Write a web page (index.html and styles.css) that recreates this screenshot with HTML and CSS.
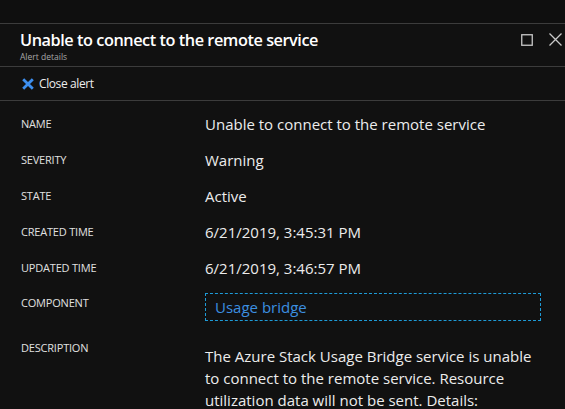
FILE: index.html
```html
<!DOCTYPE html>
<html>
<head>
<meta charset="utf-8">
<link rel="stylesheet" href="styles.css">
</head>
<body>
<div class="topbar"></div>
<div class="blade">
  <header class="head">
    <div class="titles">
      <h1 class="title">Unable to connect to the remote service</h1>
      <div class="subtitle">Alert details</div>
    </div>
    <div class="winbtns">
      <svg class="ico" width="12" height="12" viewBox="0 0 12 12"><rect x="0.75" y="0.75" width="10.5" height="10.5" fill="none" stroke="#c8c8c8" stroke-width="1.3"/></svg>
      <svg class="ico" width="13" height="13" viewBox="0 0 13 13"><path d="M0.5 0.5 L12.5 12.5 M12.5 0.5 L0.5 12.5" stroke="#c8c8c8" stroke-width="1.3"/></svg>
    </div>
  </header>
  <div class="toolbar">
    <span class="cmd">
      <svg width="12" height="12" viewBox="0 0 12 12"><path d="M1.2 1.2 L10.8 10.8 M10.8 1.2 L1.2 10.8" stroke="#3d8ff0" stroke-width="2.8"/></svg>
      <span>Close alert</span>
    </span>
  </div>
  <div class="props">
    <div class="row"><div class="lbl">NAME</div><div class="val">Unable to connect to the remote service</div></div>
    <div class="row"><div class="lbl">SEVERITY</div><div class="val">Warning</div></div>
    <div class="row"><div class="lbl">STATE</div><div class="val">Active</div></div>
    <div class="row"><div class="lbl">CREATED TIME</div><div class="val">6/21/2019, 3:45:31 PM</div></div>
    <div class="row"><div class="lbl">UPDATED TIME</div><div class="val">6/21/2019, 3:46:57 PM</div></div>
    <div class="row comp"><div class="lbl">COMPONENT</div><div class="val"><a class="link">Usage bridge</a></div></div>
    <div class="row desc"><div class="lbl">DESCRIPTION</div><div class="val">The Azure Stack Usage Bridge service is unable to connect to the remote service. Resource utilization data will not be sent. Details:</div></div>
  </div>
</div>
</body>
</html>
```
FILE: styles.css
```css
html, body {
  margin: 0;
  padding: 0;
  background: #111111;
  font-family: "Open Sans", "Noto Sans", sans-serif;
  color: #e8e8e8;
  overflow: hidden;
}
.topbar {
  height: 23px;
  background: #0f0f0f;
  border-bottom: 1px solid #3c3c3c;
}
.blade {
  background: #111111;
}
.head {
  height: 42px;
  display: flex;
  justify-content: space-between;
  align-items: flex-start;
  padding: 0 3px 0 20px;
  border-bottom: 1px solid #3c3c3c;
}
.titles {
  padding-top: 5px;
}
.title {
  margin: 0;
  font-size: 16.3px;
  font-weight: 600;
  line-height: 23px;
  color: #ffffff;
  letter-spacing: -0.45px;
}
.subtitle {
  font-size: 8.5px;
  line-height: 10px;
  color: #a8a8a8;
}
.winbtns {
  display: flex;
  gap: 16px;
  padding-top: 9px;
  align-items: center;
}
.toolbar {
  height: 33px;
  display: flex;
  align-items: center;
  padding-left: 22px;
  border-bottom: 1px solid #3c3c3c;
}
.cmd {
  display: flex;
  align-items: center;
  gap: 5px;
  font-size: 12px;
  letter-spacing: -0.4px;
  color: #ececec;
}
.props {
  padding: 12px 24px 0 21px;
  display: flex;
  flex-direction: column;
  gap: 14px;
}
.row {
  display: grid;
  grid-template-columns: 184px 1fr;
  align-items: start;
}
.lbl {
  font-size: 11px;
  line-height: 20px;
  color: #e0e0e0;
  letter-spacing: -0.2px;
  padding-top: 1px;
}
.val {
  font-size: 15px;
  line-height: 22px;
  color: #ececec;
}
.comp .lbl {
  line-height: 18px;
}
.link {
  display: block;
  height: 26px;
  line-height: 26px;
  padding-left: 9px;
  border: 1px dashed #1e9bd7;
  color: #3c8fe0;
}
.desc {
  margin-top: 2px;
}
.desc .val {
  padding-top: 8px;
}
```
